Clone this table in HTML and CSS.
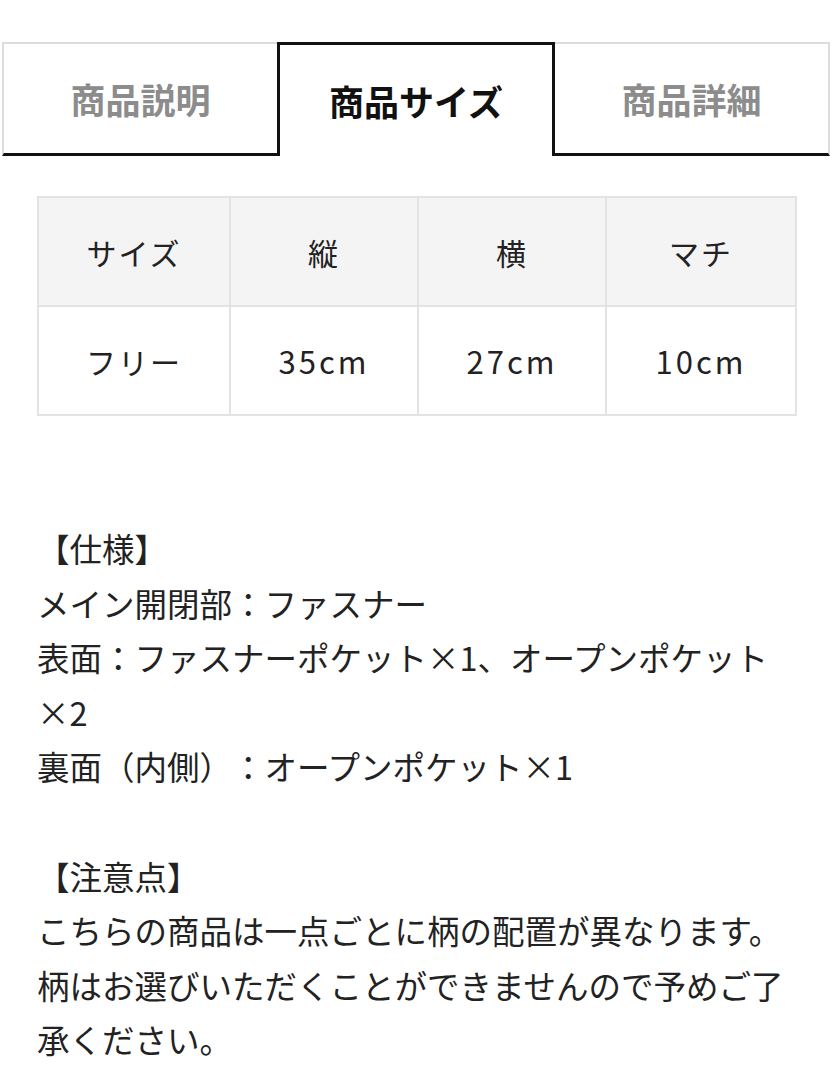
FILE: index.html
```html
<!DOCTYPE html>
<html lang="ja">
<head>
<meta charset="utf-8">
<title>商品サイズ</title>
<link rel="stylesheet" href="styles.css">
</head>
<body>
<div class="page">
  <nav class="tabs">
    <div class="tab">商品説明</div>
    <div class="tab tab-active">商品サイズ</div>
    <div class="tab tab-last">商品詳細</div>
  </nav>
  <table class="size-table">
    <colgroup>
      <col class="c1"><col class="c2"><col class="c3"><col class="c4">
    </colgroup>
    <thead>
      <tr><th>サイズ</th><th>縦</th><th>横</th><th>マチ</th></tr>
    </thead>
    <tbody>
      <tr><td>フリー</td><td class="num">35cm</td><td class="num">27cm</td><td class="num">10cm</td></tr>
    </tbody>
  </table>
  <div class="desc">
    <p>【仕様】<br>メイン開閉部：ファスナー<br>表面：ファスナーポケット×1、オープンポケット×2<br>裏面（内側）：オープンポケット×1</p>
    <p>【注意点】<br>こちらの商品は一点ごとに柄の配置が異なります。柄はお選びいただくことができませんので予めご了承ください。</p>
  </div>
</div>
</body>
</html>
```

FILE: styles.css
```css
html, body {
  margin: 0;
  padding: 0;
  background: #ffffff;
}
body {
  font-family: "Noto Sans CJK JP", "Noto Sans", sans-serif;
  color: #222222;
  text-spacing-trim: space-all;
}
.page {
  width: 832px;
  padding-top: 42px;
}
.tabs {
  display: flex;
  padding: 0 2px;
}
.tab {
  flex: 1;
  box-sizing: border-box;
  height: 114px;
  display: flex;
  align-items: center;
  justify-content: center;
  font-size: 35px;
  font-weight: 700;
  color: #8c8c8c;
  border-top: 2px solid #dcdcdc;
  border-left: 2px solid #dcdcdc;
  border-bottom: 3px solid #111111;
}
.tab-last {
  border-left: none;
  border-right: 2px solid #dcdcdc;
}
.tab-active {
  flex: 0 0 278px;
  color: #111111;
  border: 3px solid #111111;
  border-bottom: none;
}
.size-table {
  margin: 40px 0 0 37px;
  width: 758px;
  border-collapse: collapse;
  table-layout: fixed;
}
.c1 { width: 192px; }
.c2 { width: 188px; }
.c3 { width: 188px; }
.c4 { width: 190px; }
.size-table th,
.size-table td {
  border: 2px solid #e3e3e3;
  height: 107px;
  padding: 0;
  text-align: center;
  vertical-align: middle;
  font-size: 30px;
  font-weight: 400;
  letter-spacing: 2px;
  color: #222222;
}
.size-table td.num {
  font-size: 31px;
  letter-spacing: 3px;
}
.size-table th {
  background: #f4f4f4;
}
.desc {
  margin: 105px 0 0 37px;
  width: 758px;
  font-size: 32.5px;
  line-height: 54.6px;
}
.desc p {
  margin: 0 0 54.6px 0;
}
```
